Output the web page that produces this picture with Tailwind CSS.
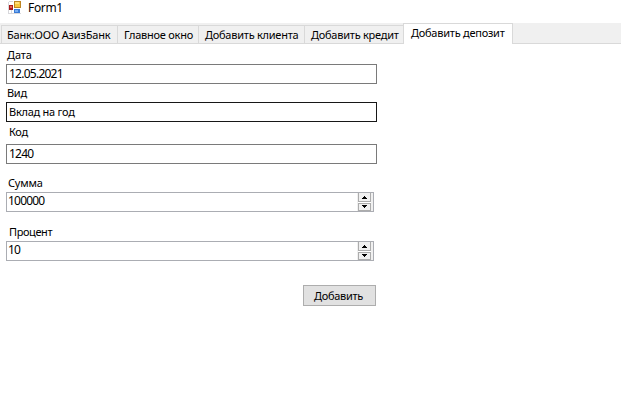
<!DOCTYPE html>
<html lang="ru">
<head>
<meta charset="utf-8">
<title>Form1</title>
<script src="https://cdn.jsdelivr.net/npm/@tailwindcss/browser@4"></script>
</head>
<body class="w-[621px] h-[413px] overflow-hidden bg-white text-black font-['Noto_Sans','Open_Sans',sans-serif] text-[11px] leading-[14px] whitespace-nowrap">
<header class="flex h-[23px] pl-2">
  <svg class="block w-[14px] h-[14px] shrink-0" viewBox="0 0 14 14" shape-rendering="crispEdges">
    <path d="M1 1.500h4M.5 2v11M3.500 10v3M0 13.500h13" fill="none" stroke="#d8d8dc"/>
    <path d="M1 5h4v5H1z" fill="#a81a1c"/><path d="M2 6h2v2H2z" fill="#e9604f"/>
    <path d="M6 1h7v7H6z" fill="#bd8522"/><path d="M7 2h5v5H7z" fill="#f7c83d"/><path d="M7 2h4v2H7z" fill="#ffe07a"/>
    <path d="M6 9h6v4H6z" fill="#397bd6"/><path d="M7 10h3v2H7z" fill="#78aef2"/>
  </svg>
  <h1 class="ml-[6px] text-[12px] leading-[15px] tracking-[-0.35px]">Form1</h1>
</header>
<nav class="flex items-end h-[21px] bg-[#f0f0f0] border-b border-[#d9d9d9] pl-px">
  <div class="w-[117px] h-[18px] border-x border-t border-[#d9d9d9] pl-[5px] pt-[2px] tracking-[-0.18px]">Банк:ООО АзизБанк</div>
  <div class="w-[81px] h-[18px] border-r border-t border-[#d9d9d9] pl-[6px] pt-[2px] tracking-[-0.25px]">Главное окно</div>
  <div class="w-[106px] h-[18px] border-r border-t border-[#d9d9d9] pl-[6px] pt-[2px] tracking-[-0.25px]">Добавить клиента</div>
  <div class="w-[98px] h-[18px] border-t border-[#d9d9d9] pl-[6px] pt-[2px] tracking-[-0.25px]">Добавить кредит</div>
  <div class="w-[110px] h-[21px] -mb-px border-x border-t border-[#d9d9d9] bg-white pl-[7px] pt-[2px] tracking-[-0.25px]">Добавить депозит</div>
</nav>
<main class="pl-[6px] pt-[4px] w-[377px]">
  <div class="h-[16px] pl-px"><span class="tracking-[-0.1px]">Дата</span></div>
  <div class="w-[371px] h-[20px] border border-[#7a7a7a] pl-[2px] pt-[2px]"><span class="text-[12px] leading-[14px] tracking-[-0.75px]">12.05.2021</span></div>
  <div class="h-[18px] pl-px pt-[2px]"><span class="tracking-[-0.3px]">Вид</span></div>
  <div class="w-[371px] h-[20px] border border-[#171717] pl-[2px] pt-[2px]"><span class="tracking-[-0.25px]">Вклад на год</span></div>
  <div class="h-[22px] pl-[3px] pt-[3px]"><span class="tracking-[-0.3px]">Код</span></div>
  <div class="w-[371px] h-[20px] border border-[#7a7a7a] pl-[2px] pt-[2px]"><span class="text-[12px] leading-[14px] tracking-[-0.8px]">1240</span></div>
  <div class="h-[28px] pl-[2px] pt-[12px]"><span class="tracking-[-0.2px]">Сумма</span></div>
  <div class="flex w-[368px] h-[20px] border border-[#abadb3] pl-px">
    <span class="grow pt-px text-[12px] leading-[14px] tracking-[-0.8px]">100000</span>
    <svg class="block w-[17px] h-[18px] shrink-0" viewBox="0 0 17 18" shape-rendering="crispEdges"><path d="M1 0h16v18H1z" fill="#f0f0f0"/><path d="M2.500 0v8.500h12V0M2.500 10v7.500h12V10" fill="none" stroke="#acacac"/><path d="M2 9h13v1H2z" fill="#fff"/><path d="M2 10.500h13" stroke="#acacac"/><path d="M8 3h1v1h1v1h1v1H6V5h1V4h1zM6 12h5v1h-1v1H9v1H8v-1H7v-1H6z" fill="#000"/></svg>
  </div>
  <div class="h-[29px] pl-[3px] pt-[13px]"><span class="tracking-[-0.4px]">Процент</span></div>
  <div class="flex w-[368px] h-[20px] border border-[#abadb3] pl-px">
    <span class="grow pt-px text-[12px] leading-[14px] tracking-[-0.8px]">10</span>
    <svg class="block w-[17px] h-[18px] shrink-0" viewBox="0 0 17 18" shape-rendering="crispEdges"><path d="M1 0h16v18H1z" fill="#f0f0f0"/><path d="M2.500 0v8.500h12V0M2.500 10v7.500h12V10" fill="none" stroke="#acacac"/><path d="M2 9h13v1H2z" fill="#fff"/><path d="M2 10.500h13" stroke="#acacac"/><path d="M8 3h1v1h1v1h1v1H6V5h1V4h1zM6 12h5v1h-1v1H9v1H8v-1H7v-1H6z" fill="#000"/></svg>
  </div>
  <button class="block ml-[297px] mt-[24px] w-[73px] h-[21px] border border-[#adadad] bg-[#e1e1e1] pl-[10px] text-left"><span class="tracking-[-0.3px]">Добавить</span></button>
</main>
</body>
</html>
